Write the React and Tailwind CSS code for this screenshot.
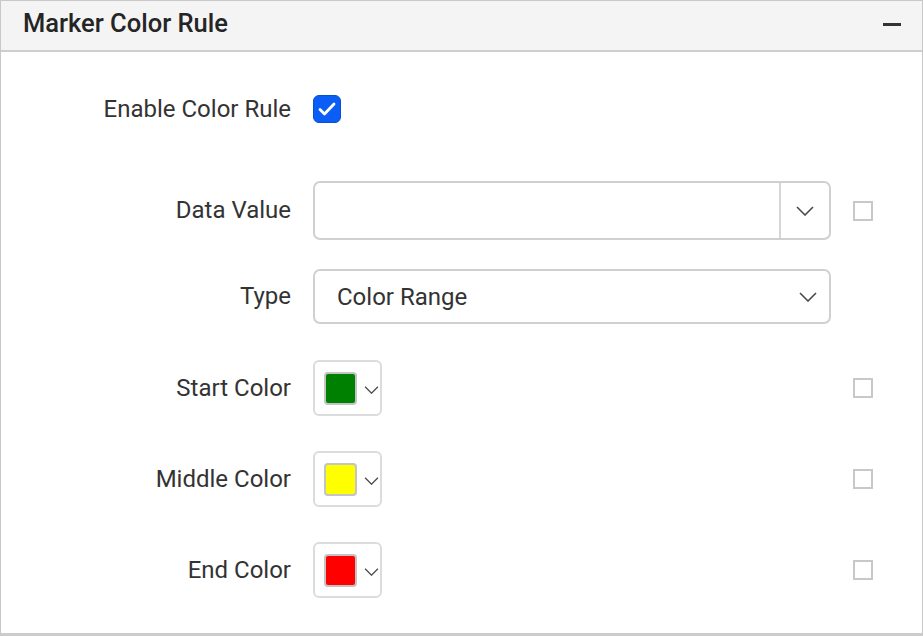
import React from "react";

const Chevron = ({ w = 18, h = 10, className = "" }) => (
  <svg width={w} height={h} viewBox="0 0 18 10" className={className} fill="none">
    <path d="M1 1 L9 9 L17 1" stroke="#4a4a4a" strokeWidth="1.6" />
  </svg>
);

const SmallBox = () => (
  <div className="w-[20px] h-[20px] border-2 border-[#c8c8c8] bg-white shrink-0" />
);

const Label = ({ children }) => (
  <div className="w-[290px] shrink-0 text-right text-[24px] text-[#333333] -mt-[1px]">{children}</div>
);

const ColorPicker = ({ color }) => (
  <div className="w-[69px] h-[56px] border-2 border-[#dcdcdc] rounded-[6px] flex items-center pl-[9px] bg-white">
    <div className="w-[33px] h-[33px] rounded-[4px] border-2 border-[#c4c4c4]" style={{ background: color }} />
    <Chevron w={15} h={8} className="ml-[7px] mt-[3px]" />
  </div>
);

export default function App() {
  return (
    <div
      className="w-[923px] h-[636px] bg-white border-l border-r border-t border-[#c8c8c8] border-b-[3px] border-b-[#cccccc] flex flex-col"
      style={{ fontFamily: "Roboto, 'Liberation Sans', sans-serif" }}
    >
      <div className="h-[51px] shrink-0 bg-[#f4f4f4] border-b-2 border-[#cecece] flex items-center justify-between pl-[22px] pr-[21px]">
        <div className="text-[25.5px] font-medium text-[#252525] leading-none -mt-[3px]">Marker Color Rule</div>
        <div className="w-[18px] h-[2.5px] bg-[#333] -mt-[2px]" />
      </div>

      <div className="flex flex-col pt-[29px]">
        <div className="flex items-center h-[56px] gap-[22px]">
          <Label>Enable Color Rule</Label>
          <div className="w-[28px] h-[28px] rounded-[6px] bg-[#0b5ef5] border border-[#0a4fd0] flex items-center justify-center">
            <svg width="18" height="14" viewBox="0 0 18 14" fill="none">
              <path d="M2 7.5 L6.5 12 L16 2" stroke="white" strokeWidth="2.8" strokeLinecap="round" strokeLinejoin="round" />
            </svg>
          </div>
        </div>

        <div className="flex items-center h-[59px] gap-[22px] mt-[44px]">
          <Label>Data Value</Label>
          <div className="w-[518px] h-[59px] border-2 border-[#d0d0d0] rounded-[7px] flex">
            <div className="flex-1" />
            <div className="w-[50px] border-l-2 border-[#d6d6d6] flex items-center justify-center">
              <Chevron />
            </div>
          </div>
          <SmallBox />
        </div>

        <div className="flex items-center h-[55px] gap-[22px] mt-[29px]">
          <Label>Type</Label>
          <div className="w-[518px] h-[55px] border-2 border-[#d0d0d0] rounded-[7px] flex items-center pl-[22px] pr-[12px]">
            <div className="flex-1 text-[24px] text-[#333]">Color Range</div>
            <Chevron />
          </div>
        </div>

        <div className="flex items-center h-[56px] gap-[22px] mt-[36px]">
          <Label>Start Color</Label>
          <div className="w-[518px]"><ColorPicker color="#008000" /></div>
          <SmallBox />
        </div>

        <div className="flex items-center h-[56px] gap-[22px] mt-[35px]">
          <Label>Middle Color</Label>
          <div className="w-[518px]"><ColorPicker color="#ffff00" /></div>
          <SmallBox />
        </div>

        <div className="flex items-center h-[56px] gap-[22px] mt-[35px]">
          <Label>End Color</Label>
          <div className="w-[518px]"><ColorPicker color="#ff0000" /></div>
          <SmallBox />
        </div>
      </div>
    </div>
  );
}
